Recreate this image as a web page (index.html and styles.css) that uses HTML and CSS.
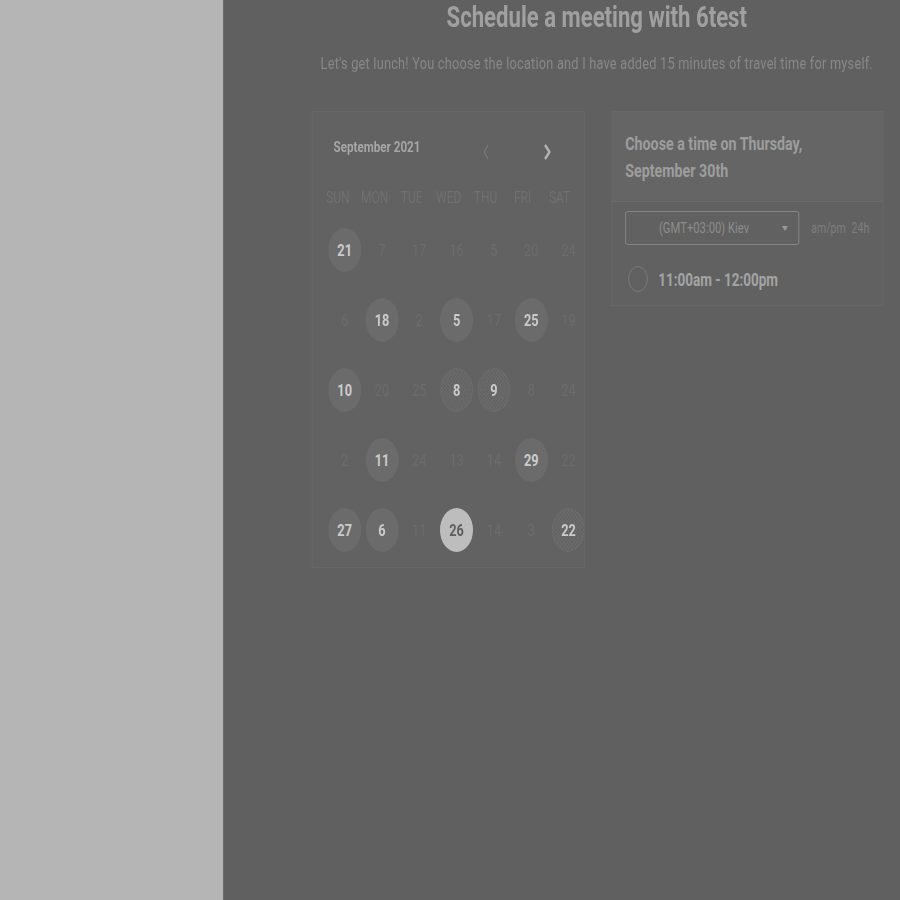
FILE: index.html
```html
<!DOCTYPE html>
<html>
<head>
<meta charset="utf-8">
<title>Schedule a meeting</title>
<link rel="stylesheet" href="styles.css">
</head>
<body>
<div class="page">
  <aside class="sidebar"></aside>
  <main class="main">
    <div class="stage">
      <h1 class="title">Schedule a meeting with 6test</h1>
      <p class="subtitle">Let's get lunch! You choose the location and I have added 15 minutes of travel time for myself.</p>
      <div class="cards">
        <section class="calendar">
          <div class="cal-head">
            <span class="month">September 2021</span>
            <button class="nav prev" aria-label="Previous">
              <svg width="12" height="18" viewBox="0 0 12 18"><polyline points="8,2 3,9 8,16" fill="none" stroke="currentColor" stroke-width="2"/></svg>
            </button>
            <button class="nav next" aria-label="Next">
              <svg width="12" height="18" viewBox="0 0 12 18"><polyline points="3,2 9,9 3,16" fill="none" stroke="currentColor" stroke-width="2.8"/></svg>
            </button>
          </div>
          <div class="weekdays">
            <span>SUN</span><span>MON</span><span>TUE</span><span>WED</span><span>THU</span><span>FRI</span><span>SAT</span>
          </div>
          <div class="days">
            <span class="day avail">21</span><span class="day">7</span><span class="day">17</span><span class="day">16</span><span class="day">5</span><span class="day">20</span><span class="day">24</span>
            <span class="day">6</span><span class="day avail">18</span><span class="day">2</span><span class="day avail">5</span><span class="day">17</span><span class="day avail">25</span><span class="day">19</span>
            <span class="day avail">10</span><span class="day">20</span><span class="day">25</span><span class="day avail hatch">8</span><span class="day avail hatch">9</span><span class="day">8</span><span class="day">24</span>
            <span class="day">2</span><span class="day avail">11</span><span class="day">24</span><span class="day">13</span><span class="day">14</span><span class="day avail">29</span><span class="day">22</span>
            <span class="day avail">27</span><span class="day avail">6</span><span class="day">11</span><span class="day selected">26</span><span class="day">14</span><span class="day">3</span><span class="day avail hatch">22</span>
          </div>
        </section>
        <section class="times">
          <div class="times-head">
            <h2>Choose a time on Thursday,<br>September 30th</h2>
          </div>
          <div class="times-body">
            <div class="tz-row">
              <div class="select">
                <span>(GMT+03:00) Kiev</span>
                <svg class="caret" width="8" height="5" viewBox="0 0 8 5"><polygon points="0,0 8,0 4,5" fill="currentColor"/></svg>
              </div>
              <div class="fmt"><span>am/pm</span><span>24h</span></div>
            </div>
            <label class="slot">
              <span class="radio"></span>
              <span class="slot-text">11:00am - 12:00pm</span>
            </label>
          </div>
        </section>
      </div>
    </div>
  </main>
</div>
</body>
</html>
```

FILE: styles.css
```css
* { box-sizing: border-box; }
html, body { margin: 0; padding: 0; }
body {
  font-family: Roboto, "Liberation Sans", Arial, sans-serif;
  background: #606060;
  overflow: hidden;
}
.page {
  display: flex;
  height: 900px;
  width: 900px;
  overflow: hidden;
}
.sidebar {
  width: 223px;
  flex: none;
  background: #b5b5b5;
}
.main {
  flex: 1;
  background: #606060;
  border-left: 1px solid #6b6b6b;
  overflow: hidden;
}
.stage {
  width: 994px;
  transform: scaleX(0.75);
  transform-origin: 0 0;
}
.title {
  margin: 0;
  font-size: 29.5px;
  line-height: 34px;
  font-weight: 700;
  color: #a0a0a0;
  text-align: center;
}
.subtitle {
  margin: 19px 0 0;
  font-size: 17px;
  letter-spacing: 0.3px;
  line-height: 20px;
  font-weight: 400;
  color: #888888;
  text-align: center;
}
.cards {
  display: flex;
  align-items: flex-start;
  gap: 35px;
  padding-left: 117px;
  margin-top: 38px;
}
.calendar {
  width: 364px;
  height: 457px;
  background: #626262;
  border: 1px solid #686868;
  overflow: hidden;
}
.cal-head {
  display: flex;
  align-items: center;
  padding: 25px 0 0 28px;
  height: 45px;
}
.month {
  width: 190px;
  font-size: 15.5px;
  font-weight: 700;
  color: #a6a6a6;
  line-height: 18px;
}
.nav {
  width: 28px;
  height: 22px;
  padding: 0;
  border: 0;
  background: none;
  display: flex;
  align-items: center;
  justify-content: center;
  margin-top: 9px;
}
.prev { color: #757575; }
.next { color: #b4b4b4; margin-left: 53px; }
.weekdays {
  display: grid;
  grid-template-columns: repeat(7, 49.3px);
  padding-left: 9px;
  margin-top: 31px;
  font-size: 16px;
  line-height: 20px;
  color: #707070;
  text-align: center;
}
.days {
  display: grid;
  grid-template-columns: repeat(7, 49.75px);
  grid-auto-rows: 70px;
  padding-left: 18px;
  margin-top: 7px;
}
.day {
  display: flex;
  align-items: center;
  justify-content: center;
  font-size: 17px;
  color: #6c6c6c;
}
.day.avail, .day.selected {
  font-weight: 700;
  color: #cbcbcb;
  position: relative;
  z-index: 0;
}
.day.avail::before, .day.selected::before {
  content: "";
  position: absolute;
  left: 50%;
  top: 50%;
  width: 44px;
  height: 44px;
  margin: -22px 0 0 -22px;
  border-radius: 50%;
  background: #6b6b6b;
  z-index: -1;
}
.day.hatch::before {
  background:
    repeating-linear-gradient(45deg, rgba(255,255,255,0.04) 0 1px, transparent 1px 3px),
    repeating-linear-gradient(-45deg, rgba(0,0,0,0.05) 0 1px, transparent 1px 3px),
    #676767;
  box-shadow: inset 0 0 0 1px #6d6d6d;
}
.day.selected { color: #5e5e5e; }
.day.selected::before { background: #bdbdbd; }
.times {
  width: 364px;
  height: 195px;
  background: #616161;
  border: 1px solid #676767;
}
.times-head {
  height: 90px;
  background: #656565;
  border-bottom: 1px solid #6a6a6a;
  padding: 18px 18px 0 18px;
}
.times-head h2 {
  margin: 0;
  font-size: 19px;
  line-height: 27px;
  font-weight: 700;
  color: #9d9d9d;
}
.times-body {
  padding: 9px 18px 0 18px;
}
.tz-row {
  display: flex;
  align-items: center;
  height: 34px;
}
.select {
  width: 232px;
  height: 34px;
  border: 1px solid #8a8a8a;
  border-radius: 3px;
  display: flex;
  align-items: center;
  padding: 0 14px 0 44px;
  font-size: 15px;
  color: #8d8d8d;
}
.select span { flex: 1; }
.caret { color: #9a9a9a; }
.fmt {
  display: flex;
  gap: 8px;
  margin-left: 16px;
  font-size: 14px;
  color: #7e7e7e;
}
.slot {
  display: flex;
  align-items: center;
  height: 34px;
  margin-top: 17px;
}
.radio {
  width: 26px;
  height: 26px;
  border: 1.5px solid #7b7b7b;
  border-radius: 50%;
  margin-left: 4px;
}
.slot-text {
  margin-left: 14px;
  font-size: 18px;
  font-weight: 700;
  color: #a4a4a4;
}
```
